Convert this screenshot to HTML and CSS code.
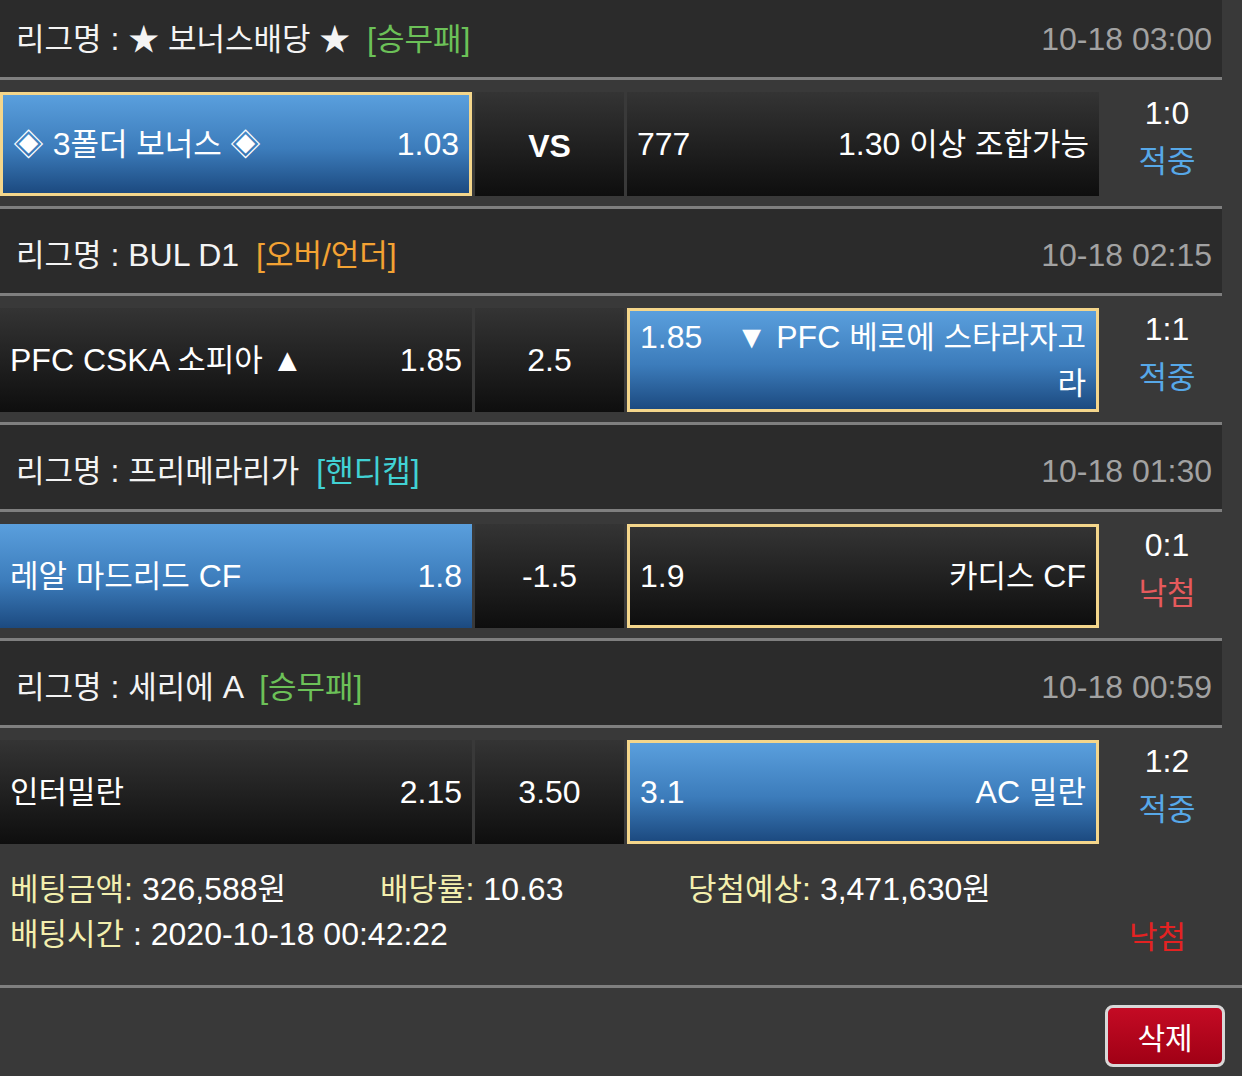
FILE: index.html
```html
<!DOCTYPE html>
<html lang="ko">
<head>
<meta charset="utf-8">
<title>배팅내역</title>
<link rel="stylesheet" href="styles.css">
</head>
<body>
<div class="list">
  <section class="game">
    <div class="league">
      <div class="league-name"><span class="ko">리그명</span> : <span class="ko">★ 보너스배당 ★</span> <span class="tag tag-green">[<span class="ko">승무패</span>]</span></div>
      <div class="time">10-18 03:00</div>
    </div>
    <div class="match">
      <div class="cell home win pick"><div class="inner"><span class="odds">1.03</span><span class="ko">◈ </span>3<span class="ko">폴더 보너스 ◈</span></div></div>
      <div class="cell mid dark"><b class="vs">VS</b></div>
      <div class="cell away dark"><div class="inner"><span class="odds">777</span>1.30 <span class="ko">이상 조합가능</span></div></div>
      <div class="result"><div>1:0</div><div class="ko hit">적중</div></div>
    </div>
  </section>

  <section class="game">
    <div class="league">
      <div class="league-name"><span class="ko">리그명</span> : BUL D1 <span class="tag tag-orange">[<span class="ko">오버</span>/<span class="ko">언더</span>]</span></div>
      <div class="time">10-18 02:15</div>
    </div>
    <div class="match">
      <div class="cell home dark"><div class="inner"><span class="odds">1.85</span>PFC CSKA <span class="ko">소피아</span> ▲</div></div>
      <div class="cell mid dark">2.5</div>
      <div class="cell away win pick"><div class="inner"><span class="odds">1.85</span>▼ PFC <span class="ko">베로에 스타라자고라</span></div></div>
      <div class="result"><div>1:1</div><div class="ko hit">적중</div></div>
    </div>
  </section>

  <section class="game">
    <div class="league">
      <div class="league-name"><span class="ko">리그명</span> : <span class="ko">프리메라리가</span> <span class="tag tag-cyan">[<span class="ko">핸디캡</span>]</span></div>
      <div class="time">10-18 01:30</div>
    </div>
    <div class="match">
      <div class="cell home win"><div class="inner"><span class="odds">1.8</span><span class="ko">레알 마드리드</span> CF</div></div>
      <div class="cell mid dark">-1.5</div>
      <div class="cell away dark pick"><div class="inner"><span class="odds">1.9</span><span class="ko">카디스</span> CF</div></div>
      <div class="result"><div>0:1</div><div class="ko miss">낙첨</div></div>
    </div>
  </section>

  <section class="game">
    <div class="league">
      <div class="league-name"><span class="ko">리그명</span> : <span class="ko">세리에</span> A <span class="tag tag-green">[<span class="ko">승무패</span>]</span></div>
      <div class="time">10-18 00:59</div>
    </div>
    <div class="match">
      <div class="cell home dark"><div class="inner"><span class="odds">2.15</span><span class="ko">인터밀란</span></div></div>
      <div class="cell mid dark">3.50</div>
      <div class="cell away win pick"><div class="inner"><span class="odds">3.1</span>AC <span class="ko">밀란</span></div></div>
      <div class="result"><div>1:2</div><div class="ko hit">적중</div></div>
    </div>
  </section>
</div>

<div class="summary">
  <div class="sum-row">
    <div class="sum-item w1"><span class="label"><span class="ko">베팅금액</span>:</span> 326,588<span class="ko">원</span></div>
    <div class="sum-item w2"><span class="label"><span class="ko">배당률</span>:</span> 10.63</div>
    <div class="sum-item"><span class="label"><span class="ko">당첨예상</span>:</span> 3,471,630<span class="ko">원</span></div>
  </div>
  <div class="sum-row between">
    <div class="sum-item"><span class="label ko">배팅시간</span> : 2020-10-18 00:42:22</div>
    <div class="ko lost">낙첨</div>
  </div>
</div>

<div class="actions">
  <button class="btn-del" type="button"><span class="ko">삭제</span></button>
</div>
</body>
</html>
```

FILE: styles.css
```css
* {
  box-sizing: border-box;
  margin: 0;
  padding: 0;
}

html,
body {
  background: #393939;
}

body {
  width: 1242px;
  height: 1076px;
  overflow: hidden;
  font-family: "Liberation Sans", "Noto Sans CJK KR", sans-serif;
  font-size: 32px;
  color: #ffffff;
}

.ko {
  font-family: "Noto Sans CJK KR", sans-serif;
  font-size: 31px;
  line-height: 1;
}

.list {
  width: 1222px;
  margin-top: -7px;
}

.league {
  height: 87px;
  display: flex;
  align-items: center;
  justify-content: space-between;
  padding: 8px 10px 0 16px;
  background: #2b2b2b;
  border-bottom: 3px solid #7f7f7f;
  line-height: 36px;
  color: #f4f4f4;
  white-space: nowrap;
}

.tag {
  margin-left: 8px;
}

.tag-green {
  color: #6cc158;
}

.tag-orange {
  color: #f3a233;
}

.tag-cyan {
  color: #41d2d4;
}

.time {
  color: #a2a2a2;
}

.match {
  height: 129px;
  display: grid;
  grid-template-columns: 472px 149px 472px 1fr;
  grid-template-rows: 104px;
  column-gap: 3px;
  align-items: start;
  padding-top: 12px;
  border-bottom: 3px solid #7f7f7f;
}

.game:last-child .match {
  height: 126px;
  border-bottom: 0;
}

.cell {
  height: 104px;
  display: flex;
  align-items: center;
  padding: 0 10px;
  line-height: 46px;
}

.cell.dark {
  background: linear-gradient(#343434, #0e0e0e);
}

.cell.win {
  background: linear-gradient(#5a9fdd, #3c7cbb 55%, #1c4a80);
}

.cell.pick {
  border: 3px solid #f4d68b;
}

.cell.mid {
  justify-content: center;
}

.vs {
  font-weight: bold;
  position: relative;
  top: 2px;
}

.inner {
  width: 100%;
}

.home .inner {
  text-align: left;
}

.home .odds {
  float: right;
}

.away .inner {
  text-align: right;
}

.away .odds {
  float: left;
  margin-right: 30px;
}

.result {
  margin-top: -2px;
  padding-left: 10px;
  text-align: center;
  line-height: 46px;
}

.result .ko {
  line-height: 46px;
  display: block;
}

.hit {
  color: #57a8e8;
}

.miss {
  color: #e65a5c;
}

.summary {
  height: 134px;
  padding: 13px 56px 0 10px;
  border-bottom: 3px solid #7f7f7f;
  line-height: 45px;
}

.sum-row {
  display: flex;
  white-space: nowrap;
}

.sum-row.between {
  justify-content: space-between;
}

.w1 {
  width: 370px;
}

.w2 {
  width: 308px;
}

.label {
  color: #f3efae;
}

.lost {
  color: #e42222;
  line-height: 45px;
}

.actions {
  display: flex;
  justify-content: flex-end;
  padding: 17px 17px 0 0;
}

.btn-del {
  width: 120px;
  height: 62px;
  border: 3px solid #d8d8d8;
  border-radius: 8px;
  background: linear-gradient(#c40b24, #a00015);
  color: #ffffff;
  display: flex;
  align-items: center;
  justify-content: center;
}

.btn-del .ko {
  font-size: 30px;
}
```
